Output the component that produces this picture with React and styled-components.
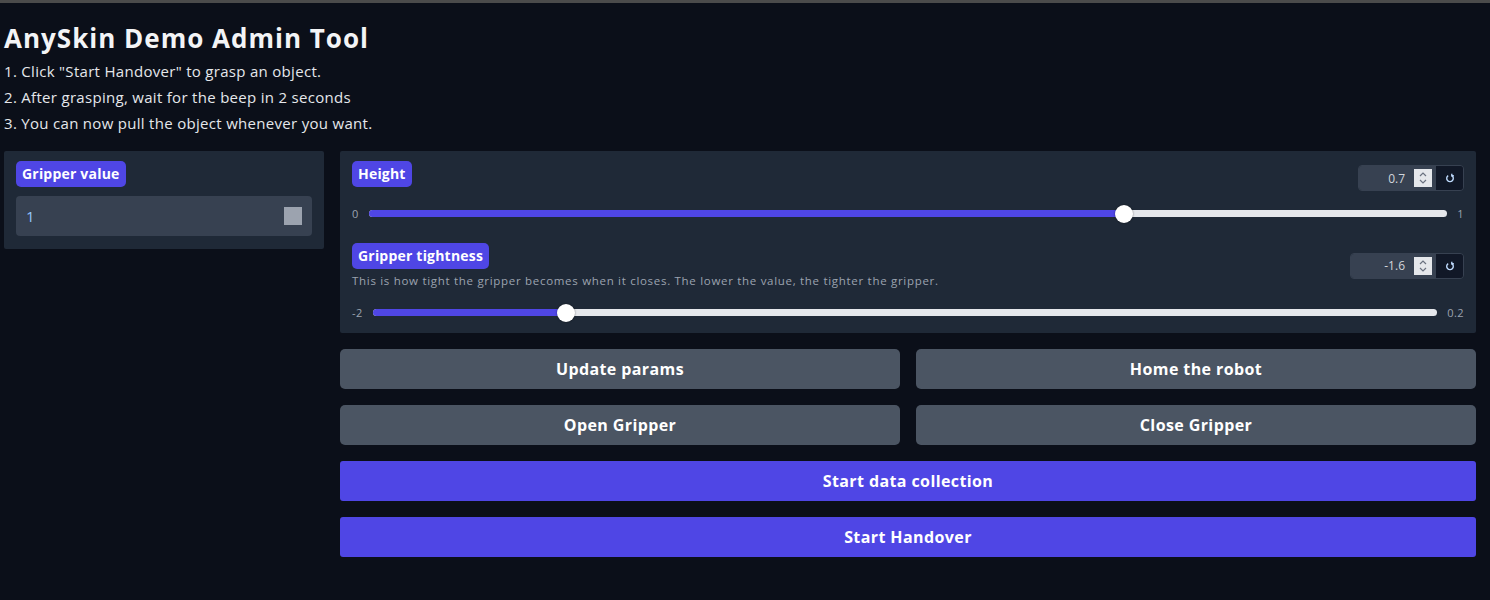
import React from 'react';
import styled, { createGlobalStyle } from 'styled-components';

const GlobalStyle = createGlobalStyle`
  html, body {
    margin: 0;
    padding: 0;
    background: #0b0f19;
    font-family: "Open Sans", Lato, sans-serif;
    color: #e5e7eb;
  }
`;

const TopLine = styled.div`
  height: 3px;
  background: #4b4b4b;
`;

const Page = styled.main`
  padding: 19px 14px 40px 4px;
`;

const Title = styled.h1`
  margin: 0 0 4px;
  font-family: "Open Sans", sans-serif;
  font-size: 26px;
  font-weight: 700;
  letter-spacing: 1px;
  color: #f3f4f6;
  line-height: 32px;
`;

const Step = styled.p`
  margin: 0;
  font-size: 15px;
  line-height: 26px;
  letter-spacing: 0.3px;
  color: #e5e7eb;
`;

const Columns = styled.div`
  display: grid;
  grid-template-columns: 320px 1fr;
  gap: 16px;
  margin-top: 15px;
  align-items: start;
`;

const Panel = styled.section`
  background: #1f2937;
  border-radius: 2px;
  padding: 10px 12px 13px 12px;
`;

const Badge = styled.span`
  display: inline-block;
  background: #4f46e5;
  color: #fff;
  font-family: "Open Sans", sans-serif;
  font-weight: 700;
  font-size: 14px;
  line-height: 26px;
  letter-spacing: 0.2px;
  padding: 0 6px;
  border-radius: 5px;
`;

const ValueBox = styled.div`
  margin-top: 9px;
  height: 40px;
  background: #374151;
  border-radius: 4px;
  display: flex;
  align-items: center;
  justify-content: space-between;
  padding: 0 10px 0 10px;
  font-size: 15px;
  color: #93c5fd;
`;

const Swatch = styled.span`
  width: 18px;
  height: 18px;
  background: #9ca3af;
`;

const RightCol = styled.div`
  display: flex;
  flex-direction: column;
  gap: 16px;
`;

const SliderBlock = styled.div`
  & + & {
    margin-top: 22px;
  }
`;

const SliderHead = styled.div`
  display: flex;
  justify-content: space-between;
  align-items: ${(p) => (p.$center ? 'center' : 'flex-start')};
`;

const Info = styled.p`
  margin: 4px 0 0;
  font-size: 11.5px;
  color: #9ca3af;
  letter-spacing: 0.7px;
`;

const NumberGroup = styled.div`
  display: flex;
  align-items: stretch;
  height: 24px;
  margin-top: ${(p) => p.$top || 0}px;
  border-radius: 4px;
  overflow: hidden;
  border: 1px solid #374151;
`;

const NumberField = styled.div`
  width: ${(p) => p.$w}px;
  background: #374151;
  display: flex;
  align-items: center;
  justify-content: flex-end;
  gap: 4px;
  padding-right: 3px;
  font-size: 12px;
  color: #d1d5db;
`;

const Spinner = styled.span`
  width: 18px;
  height: 18px;
  background: #e5e7eb;
  display: flex;
  align-items: center;
  justify-content: center;
  margin-left: 5px;
`;

const ResetBtn = styled.span`
  width: 27px;
  background: #111827;
  display: flex;
  align-items: center;
  justify-content: center;
  border-left: 1px solid #374151;
`;

const SliderRow = styled.div`
  display: flex;
  align-items: center;
  gap: 10px;
  margin-top: ${(p) => p.$top}px;
  font-size: 11px;
  letter-spacing: 0.4px;
  color: #9ca3af;
`;

const Track = styled.div`
  position: relative;
  flex: 1;
  height: 7px;
  border-radius: 4px;
  background: #e5e7eb;
`;

const Fill = styled.div`
  height: 100%;
  border-radius: 4px;
  background: #4f46e5;
`;

const Thumb = styled.div`
  position: absolute;
  top: 50%;
  width: 18px;
  height: 18px;
  border-radius: 50%;
  background: #fff;
  box-shadow: 0 0 2px rgba(0, 0, 0, 0.5);
  transform: translate(-50%, -50%);
`;

const ButtonGrid = styled.div`
  display: grid;
  grid-template-columns: 1fr 1fr;
  gap: 16px;
`;

const Button = styled.button`
  height: 40px;
  border: none;
  border-radius: ${(p) => (p.$primary ? '3px' : '5px')};
  background: ${(p) => (p.$primary ? '#4f46e5' : '#4b5563')};
  color: #fff;
  font-family: "Open Sans", sans-serif;
  font-weight: 700;
  font-size: 16px;
  letter-spacing: 0.4px;
  cursor: pointer;
`;

function Chevrons() {
  return (
    <svg width="10" height="14" viewBox="0 0 10 14" fill="none" stroke="#6b7280" strokeWidth="1.2">
      <path d="M2 5 L5 2 L8 5" />
      <path d="M2 9 L5 12 L8 9" />
    </svg>
  );
}

function ResetIcon() {
  return (
    <svg width="10" height="10" viewBox="0 0 10 10" fill="none" stroke="#bfdbfe" strokeWidth="1.4">
      <path d="M3.2 2.6 A3.3 3.3 0 1 0 6.8 2.6" />
      <path d="M6.8 0.8 L6.8 2.8 L8.8 2.8" />
    </svg>
  );
}

function Slider({ min, max, value, top }) {
  const pct = ((value - min) / (max - min)) * 100;
  return (
    <SliderRow $top={top}>
      <span>{min}</span>
      <Track>
        <Fill style={{ width: `${pct}%` }} />
        <Thumb style={{ left: `${pct}%` }} />
      </Track>
      <span>{max}</span>
    </SliderRow>
  );
}

function NumberInput({ value, width, top }) {
  return (
    <NumberGroup $top={top}>
      <NumberField $w={width}>
        {value}
        <Spinner>
          <Chevrons />
        </Spinner>
      </NumberField>
      <ResetBtn>
        <ResetIcon />
      </ResetBtn>
    </NumberGroup>
  );
}

export default function App() {
  return (
    <>
      <GlobalStyle />
      <TopLine />
      <Page>
        <Title>AnySkin Demo Admin Tool</Title>
        <Step>1. Click "Start Handover" to grasp an object.</Step>
        <Step>2. After grasping, wait for the beep in 2 seconds</Step>
        <Step>3. You can now pull the object whenever you want.</Step>

        <Columns>
          <Panel>
            <Badge>Gripper value</Badge>
            <ValueBox>
              1
              <Swatch />
            </ValueBox>
          </Panel>

          <RightCol>
            <Panel>
              <SliderBlock>
                <SliderHead>
                  <Badge>Height</Badge>
                  <NumberInput value="0.7" width={73} top={4} />
                </SliderHead>
                <Slider min={0} max={1} value={0.7} top={15} />
              </SliderBlock>
              <SliderBlock>
                <SliderHead $center>
                  <div>
                    <Badge>Gripper tightness</Badge>
                    <Info>
                      This is how tight the gripper becomes when it closes. The lower the value, the tighter the gripper.
                    </Info>
                  </div>
                  <NumberInput value="-1.6" width={81} top={0} />
                </SliderHead>
                <Slider min={-2} max={0.2} value={-1.6} top={17} />
              </SliderBlock>
            </Panel>

            <ButtonGrid>
              <Button>Update params</Button>
              <Button>Home the robot</Button>
              <Button>Open Gripper</Button>
              <Button>Close Gripper</Button>
            </ButtonGrid>
            <Button $primary>Start data collection</Button>
            <Button $primary>Start Handover</Button>
          </RightCol>
        </Columns>
      </Page>
    </>
  );
}
